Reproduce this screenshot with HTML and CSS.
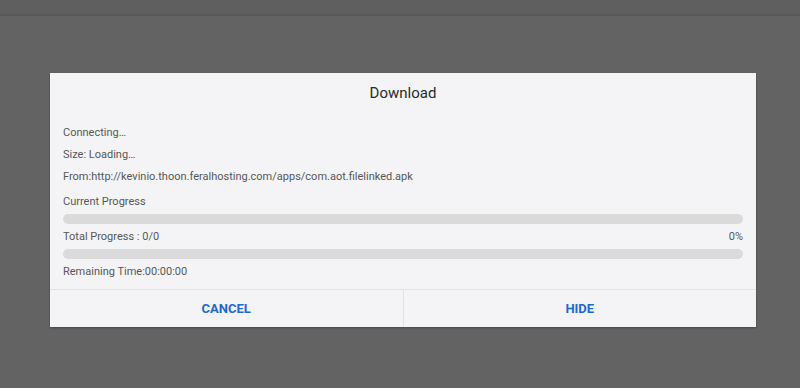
FILE: index.html
```html
<!DOCTYPE html>
<html>
<head>
<meta charset="utf-8">
<link rel="stylesheet" href="styles.css">
</head>
<body>
<div class="topbar"></div>
<div class="stage">
  <div class="dialog">
    <div class="title">Download</div>
    <div class="content">
      <div class="line l1">Connecting…</div>
      <div class="line l2">Size: Loading…</div>
      <div class="line l3">From:http://kevinio.thoon.feralhosting.com/apps/com.aot.filelinked.apk</div>
      <div class="line l4">Current Progress</div>
      <div class="bar"></div>
      <div class="line row l5"><span>Total Progress : 0/0</span><span>0%</span></div>
      <div class="bar"></div>
      <div class="line l6">Remaining Time:00:00:00</div>
    </div>
    <div class="buttons">
      <div class="btn">CANCEL</div>
      <div class="btn">HIDE</div>
    </div>
  </div>
</div>
</body>
</html>
```
FILE: styles.css
```css
html, body { margin: 0; padding: 0; }
body {
  width: 800px;
  height: 388px;
  background: #636363;
  font-family: Roboto, "Liberation Sans", sans-serif;
  overflow: hidden;
}
.topbar {
  height: 14px;
  background: #5f5f5f;
  border-bottom: 2px solid #585858;
}
.stage {
  padding: 57px 0 0 50px;
}
.dialog {
  width: 706px;
  height: 254px;
  background: #f4f4f7;
  display: flex;
  flex-direction: column;
  box-shadow: 0 1px 2px rgba(0,0,0,0.3);
}
.title {
  height: 40px;
  line-height: 40px;
  text-align: center;
  font-size: 15px;
  color: #2a2a2a;
}
.content {
  padding: 0 13px 0 13px;
  flex: 1;
  display: flex;
  flex-direction: column;
  color: #575757;
  font-size: 11px;
}
.line { line-height: 14px; }
.l1 { margin-top: 13px; }
.l2 { margin-top: 8px; }
.l3 { margin-top: 8px; }
.l4 { margin-top: 11px; }
.row { display: flex; justify-content: space-between; }
.bar {
  height: 10px;
  border-radius: 5px;
  background: #dadada;
  margin-top: 5px;
}
.l5 { margin-top: 6px; }
.l6 { margin-top: 6px; }
.buttons {
  height: 37px;
  border-top: 1px solid #e2e2e6;
  display: flex;
}
.btn {
  flex: 1;
  display: flex;
  align-items: center;
  justify-content: center;
  color: #1f68c9;
  font-weight: bold;
  font-size: 13px;
}
.btn + .btn { border-left: 1px solid #e2e2e6; }
```
